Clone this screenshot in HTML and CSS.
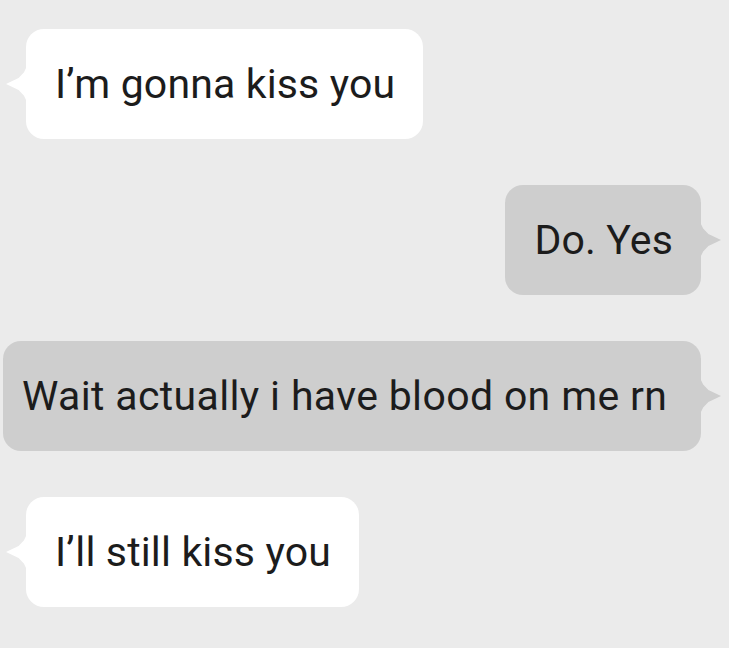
FILE: index.html
```html
<!DOCTYPE html>
<html lang="en">
<head>
    <meta charset="UTF-8">
    <title>Chat</title>
    <link rel="stylesheet" href="styles.css">
</head>
<body>
    <div class="chat">
        <div class="msg in">
            <div class="bubble"><span class="text">I’m gonna kiss you</span></div>
        </div>
        <div class="msg out">
            <div class="bubble"><span class="text">Do. Yes</span></div>
        </div>
        <div class="msg out wide">
            <div class="bubble"><span class="text">Wait actually i have blood on me rn</span></div>
        </div>
        <div class="msg in">
            <div class="bubble"><span class="text">I’ll still kiss you</span></div>
        </div>
    </div>
</body>
</html>
```
FILE: styles.css
```css
body,div{
    padding:0;
    margin:0;
}
body{
    background-color:#ebebeb;
    font-family:Roboto,"Liberation Sans",Arial,sans-serif;
    color:#1c1c1c;
    width:729px;
    height:648px;
    overflow:hidden;
}
.chat{
    display:flex;
    flex-direction:column;
    gap:46px;
    padding-top:29px;
}
.msg{
    display:flex;
}
.msg.in{
    padding-left:26px;
}
.msg.out{
    justify-content:flex-end;
    padding-right:28px;
}
.msg.wide{
    padding-left:3px;
}
.bubble{
    position:relative;
    height:110px;
    display:flex;
    align-items:center;
    border-radius:18px;
    font-size:41px;
    letter-spacing:0.15px;
    padding:0 28px 0 29px;
    box-sizing:border-box;
}
.msg.in .bubble{
    background-color:#fff;
}
.msg.out .bubble{
    background-color:#cecece;
}
.msg.wide .bubble{
    flex:1;
    letter-spacing:0.35px;
    padding:0 30px 0 19px;
}
/* tails */
.bubble::before{
    content:"";
    position:absolute;
    top:37px;
    width:21px;
    height:36px;
    background-color:inherit;
}
.msg.in .bubble::before{
    left:-20px;
    clip-path:polygon(100% 0,85% 18%,60% 33%,0 50%,60% 67%,85% 82%,100% 100%);
}
.msg.out .bubble::before{
    right:-20px;
    clip-path:polygon(0 0,15% 18%,40% 33%,100% 50%,40% 67%,15% 82%,0 100%);
}
```
